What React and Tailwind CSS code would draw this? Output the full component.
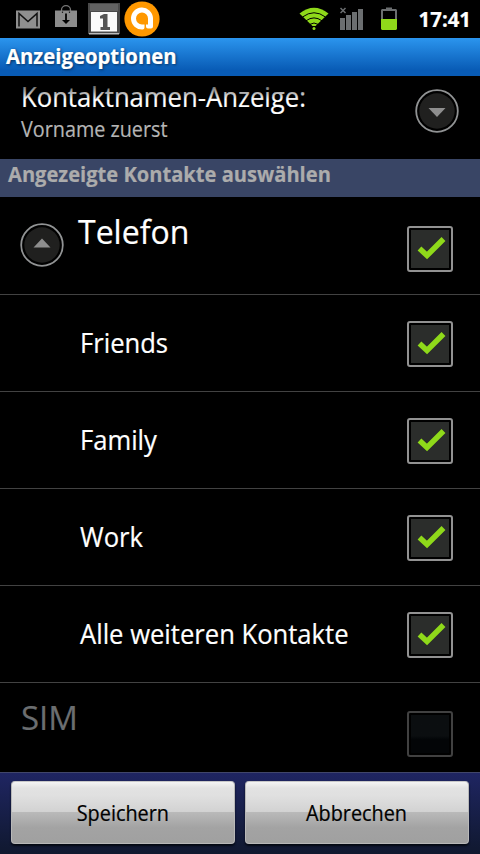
import { clsx } from "clsx";

const groups = ["Friends", "Family", "Work", "Alle weiteren Kontakte"];

const MailIcon = () => (
  <svg width="24" height="19" viewBox="0 0 24 19">
    <rect width="24" height="18" y="0.5" fill="#8f8f8f" />
    <path d="M3 16.500V3.500L12 11.500L21 3.500V16.500" fill="none" stroke="#111" strokeWidth="1.500" />
  </svg>
);

const MarketIcon = () => (
  <svg width="22" height="23" viewBox="0 0 22 23">
    <path d="M6.500 6V5A4.500 4.300 0 0 1 15.500 5V6" fill="none" stroke="#777" strokeWidth="1.300" />
    <path d="M0 5.500H22V22H0Z" fill="#8c8c8c" />
    <path d="M7.500 8V6.500M14.500 8V6.500" stroke="#222" strokeWidth="1.200" />
    <path d="M11 8.500V16" stroke="#000" strokeWidth="1.800" />
    <path d="M7 15H15L11 19Z" fill="#000" />
  </svg>
);

const CalendarIcon = () => (
  <svg width="32" height="32" viewBox="0 0 32 32">
    <rect width="32" height="31" fill="#4a4a4a" />
    <rect x="2" y="1" width="28" height="7" fill="#626262" />
    <rect x="3" y="9" width="26" height="19.500" fill="#fafafa" />
    <rect x="1" y="30" width="30" height="1.500" fill="#bbb" />
    <path d="M16 11H19.500V24H22V27H12.500V24H15V15.500H12V13Z" fill="#555" />
  </svg>
);

const AvastIcon = () => (
  <svg width="36" height="36" viewBox="0 0 36 36">
    <circle cx="18" cy="18" r="17.600" fill="#ff9800" />
    <path
      d="M18.500 28.500A11 11 0 1 1 29 17V25.500Q29 27.500 27 27.500H24Q22 27.500 22 25.500V23.500H24V17.500A6 6 0 1 0 18 23.500H20.500V26.500Q20.500 28.500 18.500 28.500Z"
      fill="#fff"
    />
  </svg>
);

const WifiIcon = () => (
  <svg width="30" height="24" viewBox="0 0 30 24">
    <path d="M15 20.500L0.500 6.500Q15 -5 29.500 6.500Z" fill="#8fd91a" />
    <path d="M3.500 10Q15 1.500 26.500 10M7 13.800Q15 8 23 13.800M10.500 17.500Q15 14.500 19.500 17.500" fill="none" stroke="#000" strokeWidth="1" />
    <path d="M12 19.500H18" stroke="#000" strokeWidth="1" />
    <circle cx="15" cy="21.500" r="1.500" fill="#8fd91a" />
  </svg>
);

const SignalIcon = () => (
  <svg width="24" height="24" viewBox="0 0 24 24">
    <path d="M0.500 1L5.500 6M5.500 1L0.500 6" stroke="#6b6e70" strokeWidth="1.500" />
    <path d="M0 11H5V23H0ZM6 8H11V23H6ZM12 5H17V23H12ZM18 2H23V23H18Z" fill="#6b6e70" />
  </svg>
);

const BatteryIcon = () => (
  <svg width="16" height="24" viewBox="0 0 16 24">
    <path d="M5 0.500H11V2H15L16 3V13H0V3L1 2H5Z" fill="#6b6e70" />
    <rect x="2" y="4" width="12" height="9" fill="#000" />
    <path d="M0 12H16V22L15 23H1L0 22Z" fill="#8fd91a" />
  </svg>
);

const RoundArrow = ({ up }) => (
  <svg width="44" height="44" viewBox="0 0 44 44" className="shrink-0">
    <circle cx="22" cy="22" r="20.800" fill="#000" stroke="#919394" strokeWidth="1.800" />
    <circle cx="22" cy="22" r="17.700" fill="#20201f" />
    {up ? <path d="M22 15.500L30.500 24.500H13.500Z" fill="#8e8e8e" /> : <path d="M13.500 19H30.500L22 28Z" fill="#8e8e8e" />}
  </svg>
);

const Checkbox = ({ checked }) => (
  <div
    className={clsx(
      "flex h-[46px] w-[46px] shrink-0 items-center justify-center rounded-[3px] border-2 bg-black",
      checked ? "border-[#929292]" : "border-[#414141]"
    )}
  >
    <div
      className={clsx(
        "h-[38px] w-[38px]",
        checked ? "bg-[#2b2d2b]" : "bg-linear-to-b from-[#0b0e10] from-55% to-[#030507] to-65%"
      )}
    >
      {checked && (
        <svg width="38" height="38" viewBox="0 0 38 38">
          <path d="M8.500 18.500L16 25.500L32.500 9" fill="none" stroke="#8fd91a" strokeWidth="5.500" />
        </svg>
      )}
    </div>
  </div>
);

const FooterButton = ({ children }) => (
  <button className="flex h-[63px] flex-1 items-center justify-center rounded-[4px] border border-[#b8b8b8] border-t-[#c8c8c8] bg-linear-[to_bottom,#f4f4f4_0%,#e2e2e2_10%,#e0e0e0_22%,#d2d2d2_49%,#b9b9b9_50%,#a3a3a3_75%,#a0a0a0_100%] text-[21px] text-black shadow-[0_2px_2px_#050914]">
    <span className="scale-x-[0.945] pt-0.5 pr-px">{children}</span>
  </button>
);

export default function App() {
  return (
    <div className="flex h-[854px] w-[480px] flex-col overflow-hidden bg-black font-['Open_Sans','Noto_Sans',sans-serif] text-white [-webkit-text-stroke:0.2px]">
      <header className="flex h-[38px] shrink-0 items-center pr-2.5 pl-4">
        <MailIcon />
        <div className="ml-[15px] pb-[5px]"><MarketIcon /></div>
        <div className="ml-[11px]"><CalendarIcon /></div>
        <div className="ml-[4px]"><AvastIcon /></div>
        <div className="ml-auto flex items-center">
          <WifiIcon />
          <div className="ml-[11px]"><SignalIcon /></div>
          <div className="ml-[17px]"><BatteryIcon /></div>
          <span className="-mr-px ml-[20px] origin-right scale-x-[0.97] text-[21px] leading-[38px] font-bold">17:41</span>
        </div>
      </header>
      <div className="flex h-[38px] shrink-0 items-center bg-linear-to-b from-[#2b95ee] to-[#085bb5] to-85% px-1.5">
        <h1 className="origin-left scale-x-[0.967] text-[21px] font-bold [text-shadow:1px_1px_3px_#04305f]">Anzeigeoptionen</h1>
      </div>

      <main className="relative min-h-0 flex-1 overflow-hidden">
        {/* fading edge of the scrolled list */}
        <div className="absolute inset-x-0 top-0 z-10 h-[24px] bg-linear-to-b from-black to-transparent" />
        <div className="flex h-[83px] items-start justify-between pr-[21px] pl-[21px]">
          <div>
            <p className="origin-left scale-x-[0.95] text-[27px] leading-[41px]">Kontaktnamen-Anzeige:</p>
            <p className="origin-left scale-x-[0.942] text-[21px] leading-[25px] text-[#b5b5b5]">Vorname zuerst</p>
          </div>
          <div className="relative z-20 pt-[13px]"><RoundArrow /></div>
        </div>
        <h2 className="h-[38px] bg-[#394565] px-2 text-[21px] leading-[31px] font-bold text-[#acacac]">
          <span className="inline-block origin-left scale-x-[0.958]">Angezeigte Kontakte auswählen</span>
        </h2>
        <div className="flex h-[98px] items-start border-b border-[#424242] pr-[27px] pl-5">
          <div className="pt-[26px]"><RoundArrow up /></div>
          <span className="ml-[14px] origin-left scale-x-[0.97] text-[33px] leading-[70px]">Telefon</span>
          <div className="ml-auto pt-[29px]"><Checkbox checked /></div>
        </div>
        {groups.map((name) => (
          <div key={name} className="flex h-[97px] items-center justify-between border-b border-[#424242] pt-0.5 pr-[27px] pl-20">
            <span className="origin-left scale-x-[0.948] pb-0.5 text-[27px]">{name}</span>
            <Checkbox checked />
          </div>
        ))}
        <div className="flex items-start justify-between pr-[27px] pl-[21px]">
          <span className="text-[33px] leading-[69px] text-[#6b6e70]">SIM</span>
          <div className="pt-[28px]"><Checkbox /></div>
        </div>
      </main>

      <footer className="flex h-[82px] shrink-0 gap-2.5 border-t border-[#41466a] bg-linear-to-b from-[#1f2562] to-[#10182f] px-[11px] pt-2">
        <FooterButton>Speichern</FooterButton>
        <FooterButton>Abbrechen</FooterButton>
      </footer>
    </div>
  );
}
